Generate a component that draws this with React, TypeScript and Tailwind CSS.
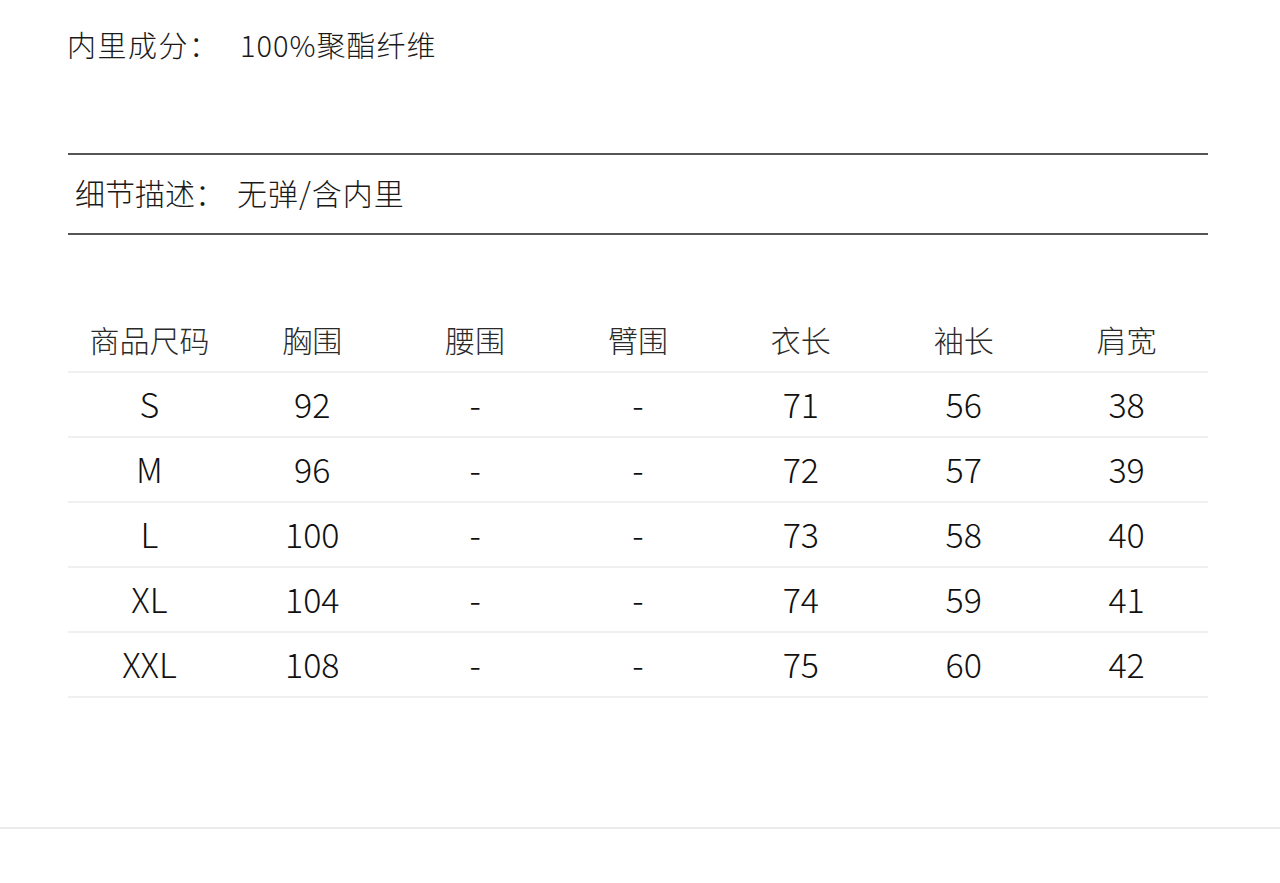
import React from "react";

const headers = ["商品尺码", "胸围", "腰围", "臂围", "衣长", "袖长", "肩宽"];
const rows = [
  ["S", "92", "-", "-", "71", "56", "38"],
  ["M", "96", "-", "-", "72", "57", "39"],
  ["L", "100", "-", "-", "73", "58", "40"],
  ["XL", "104", "-", "-", "74", "59", "41"],
  ["XXL", "108", "-", "-", "75", "60", "42"],
];

export default function App() {
  return (
    <div
      className="w-[1280px] h-[883px] bg-white text-[#1a1a1a] overflow-hidden font-light"
      style={{ fontFamily: '"Noto Sans CJK SC", "Noto Sans", sans-serif' }}
    >
      <div className="h-[88px] flex items-center pl-[67px] text-[29px] leading-none">
        <span className="w-[173px] tracking-[1.5px]">内里成分：</span>
        <span className="tracking-[1px]">100%聚酯纤维</span>
      </div>
      <div className="mt-[65px] ml-[68px] w-[1140px] h-[2px] bg-[#555]" />
      <div className="ml-[68px] w-[1140px] h-[78px] flex items-center pl-[7px] pb-[5px] text-[30px] leading-none">
        <span className="w-[162px]">细节描述：</span>
        <span className="tracking-[1px]">无弹/含内里</span>
      </div>
      <div className="ml-[68px] w-[1140px] h-[2px] bg-[#555]" />
      <div className="ml-[68px] w-[1140px] mt-[73px]">
        <div className="grid grid-cols-7 h-[65px] border-b-2 border-[#f0f0f0] items-center text-[30px] text-[#2a2a2a] pb-[2px]">
          {headers.map((h) => (
            <div key={h} className="text-center leading-none">
              {h}
            </div>
          ))}
        </div>
        {rows.map((r, i) => (
          <div
            key={i}
            className="grid grid-cols-7 h-[65px] border-b-2 border-[#f0f0f0] items-center text-[34px] text-[#111] pb-[2px]"
          >
            {r.map((c, j) => (
              <div key={j} className="text-center leading-none">
                {c}
              </div>
            ))}
          </div>
        ))}
      </div>
      <div className="mt-[129px] w-full h-[2px] bg-[#ebebeb]" />
    </div>
  );
}
